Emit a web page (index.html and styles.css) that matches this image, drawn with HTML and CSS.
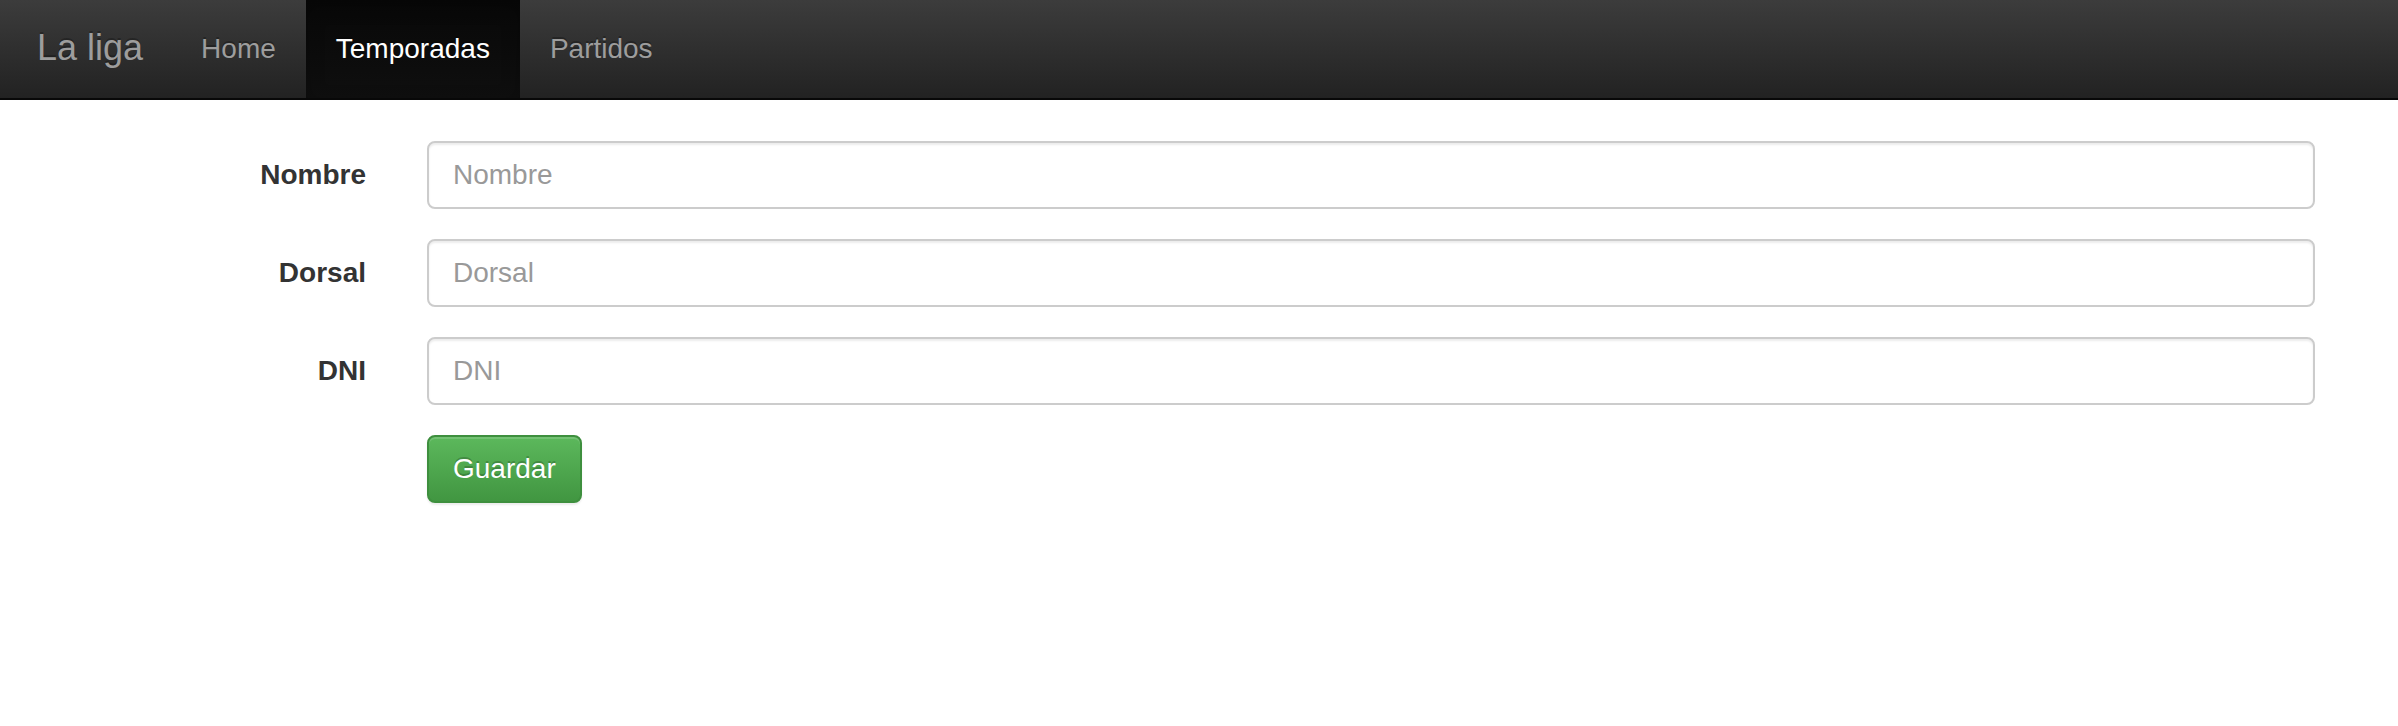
FILE: index.html
```html
<!DOCTYPE html>
<html lang="es">
<head>
<meta charset="utf-8">
<title>La liga</title>
<link rel="stylesheet" href="styles.css">
</head>
<body>
<nav class="navbar">
  <a class="brand" href="#">La liga</a>
  <ul class="nav">
    <li><a href="#">Home</a></li>
    <li class="active"><a href="#">Temporadas</a></li>
    <li><a href="#">Partidos</a></li>
  </ul>
</nav>
<form class="form">
  <div class="group">
    <label class="label" for="nombre">Nombre</label>
    <input class="input" id="nombre" type="text" placeholder="Nombre">
  </div>
  <div class="group">
    <label class="label" for="dorsal">Dorsal</label>
    <input class="input" id="dorsal" type="text" placeholder="Dorsal">
  </div>
  <div class="group">
    <label class="label" for="dni">DNI</label>
    <input class="input" id="dni" type="text" placeholder="DNI">
  </div>
  <div class="group">
    <span></span>
    <div><button class="btn" type="button">Guardar</button></div>
  </div>
</form>
</body>
</html>
```
FILE: styles.css
```css
* { box-sizing: border-box; }
html, body { margin: 0; padding: 0; }
body {
  font-family: "Liberation Sans", Arial, Helvetica, sans-serif;
  font-size: 28px;
  line-height: 40px;
  color: #333;
  background: #fff;
}
.navbar {
  display: flex;
  align-items: stretch;
  height: 100px;
  background-image: linear-gradient(to bottom, #3c3c3c 0, #222 100%);
  border-bottom: 2px solid #080808;
  padding-left: 7px;
  margin-bottom: 41px;
}
.brand {
  display: block;
  padding: 28px 28px 30px 30px;
  font-size: 36px;
  line-height: 40px;
  color: #9d9d9d;
  text-decoration: none;
  text-shadow: 0 -2px 0 rgba(0,0,0,.25);
}
.nav {
  display: flex;
  list-style: none;
  margin: 0;
  padding: 0;
}
.nav li a {
  display: block;
  padding: 29px 30px 29px 30px;
  line-height: 40px;
  font-size: 28px;
  color: #9d9d9d;
  text-decoration: none;
  text-shadow: 0 -2px 0 rgba(0,0,0,.25);
}
.nav li.active a {
  color: #fff;
  background-image: linear-gradient(to bottom, #080808 0, #0f0f0f 100%);
  box-shadow: inset 0 6px 18px rgba(0,0,0,.25);
}
.form {
  padding-right: 83px;
}
.group {
  display: grid;
  grid-template-columns: 366px 1fr;
  column-gap: 61px;
  margin-bottom: 30px;
}
.label {
  text-align: right;
  font-weight: bold;
  padding-top: 14px;
  line-height: 40px;
  color: #333;
}
.input {
  display: block;
  width: 100%;
  height: 68px;
  padding: 12px 24px;
  font-family: inherit;
  font-size: 28px;
  line-height: 40px;
  color: #555;
  background: #fff;
  border: 2px solid #ccc;
  border-radius: 8px;
  box-shadow: inset 0 2px 2px rgba(0,0,0,.075);
  outline: none;
}
.input::placeholder { color: #999; opacity: 1; }
.btn {
  display: inline-block;
  padding: 12px 24px;
  font-family: inherit;
  font-size: 28px;
  line-height: 40px;
  color: #fff;
  background-image: linear-gradient(to bottom, #5cb85c 0, #419641 100%);
  border: 2px solid #3e8f3e;
  border-radius: 8px;
  text-shadow: 0 -2px 0 rgba(0,0,0,.2);
  box-shadow: inset 0 2px 0 rgba(255,255,255,.15), 0 2px 2px rgba(0,0,0,.075);
  cursor: pointer;
}
```
